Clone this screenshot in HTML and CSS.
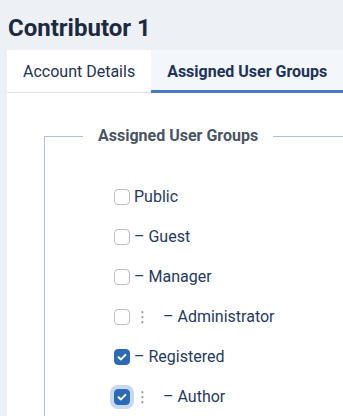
FILE: index.html
```html
<!DOCTYPE html>
<html lang="en">
<head>
    <meta charset="UTF-8">
    <title>Contributor 1</title>
    <link rel="stylesheet" href="styles.css">
</head>
<body>
<div class="page">
    <h1 class="title">Contributor 1</h1>
    <div class="tabs">
        <div class="tab">Account Details</div>
        <div class="tab active">Assigned User Groups</div>
        <div class="tab-fill"></div>
    </div>
    <div class="panel">
        <fieldset class="groups">
            <legend>Assigned User Groups</legend>
            <ul class="group-list">
                <li><span class="box"></span>Public</li>
                <li><span class="box"></span>&ndash; Guest</li>
                <li><span class="box"></span>&ndash; Manager</li>
                <li><span class="box"></span><span class="dots">&#8942;</span>&ndash; Administrator</li>
                <li><span class="box checked"><svg width="14" height="14" viewBox="0 0 14 14"><path d="M3.6 7.2 L6 9.4 L10.4 4.9" fill="none" stroke="#fff" stroke-width="2" stroke-linecap="round" stroke-linejoin="round"/></svg></span>&ndash; Registered</li>
                <li><span class="box checked focus"><svg width="14" height="14" viewBox="0 0 14 14"><path d="M3.6 7.2 L6 9.4 L10.4 4.9" fill="none" stroke="#fff" stroke-width="2" stroke-linecap="round" stroke-linejoin="round"/></svg></span><span class="dots">&#8942;</span>&ndash; Author</li>
            </ul>
        </fieldset>
    </div>
</div>
</body>
</html>
```

FILE: styles.css
```css
html, body {
    margin: 0;
    padding: 0;
    overflow: hidden;
}

body {
    background-color: #edf1f6;
    font-family: Roboto, "Liberation Sans", sans-serif;
    color: #1f3a63;
}

.page {
    padding-left: 7px;
}

.title {
    margin: 0 0 8px 1px;
    padding-top: 14px;
    font-size: 24px;
    line-height: 28px;
    font-weight: 700;
    color: #1b2a41;
}

.tabs {
    display: flex;
}

.tab {
    padding: 10px 16px 8px;
    font-size: 16px;
    line-height: 24px;
    color: #1d3358;
    background-color: #fff;
    border-bottom: 1px solid #dbe2ea;
    white-space: nowrap;
}

.tab.active {
    font-weight: 700;
    background-color: #f3f6fa;
    padding-bottom: 6px;
    border-bottom: 3px solid #4a7cc4;
}

.tab-fill {
    flex: 1;
    background-color: #f3f6fa;
    border-bottom: 1px solid #dbe2ea;
}

.panel {
    background-color: #fff;
    padding: 31px 0 8px 37px;
}

.groups {
    margin: 0;
    padding: 0 0 0 38px;
    border: 1px solid #a9c1de;
    border-right: none;
    border-bottom: none;
    min-width: 0;
}

.groups legend {
    padding: 0 15px;
    font-size: 16px;
    line-height: 24px;
    font-weight: 700;
    color: #4a5563;
}

.group-list {
    list-style: none;
    margin: 29px 0 0;
    padding: 0 0 0 31px;
}

.group-list li {
    display: flex;
    align-items: center;
    height: 40px;
    font-size: 16px;
    line-height: 24px;
}

.box {
    box-sizing: border-box;
    width: 16px;
    height: 16px;
    margin-right: 4px;
    border: 1px solid #b9bec5;
    border-radius: 4px;
    background-color: #fff;
    display: flex;
    align-items: center;
    justify-content: center;
    flex-shrink: 0;
}

.box.checked {
    background-color: #2c6ab5;
    border-color: #2c6ab5;
}

.box.focus {
    box-shadow: 0 0 0 4px #c8d8ee;
}

.dots {
    width: 29px;
    padding-left: 1px;
    box-sizing: border-box;
    color: #7d8a99;
    font-family: "DejaVu Sans", sans-serif;
    font-size: 15px;
}
```
